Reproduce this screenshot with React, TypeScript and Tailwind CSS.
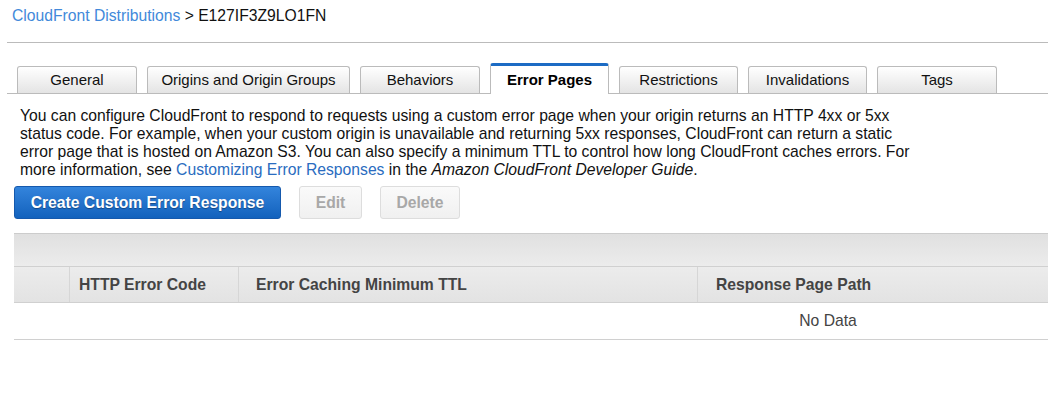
import React from "react";

const tabs = [
  { label: "General", w: "w-[120px]" },
  { label: "Origins and Origin Groups", w: "w-[203px]" },
  { label: "Behaviors", w: "w-[120px]" },
  { label: "Error Pages", w: "w-[119px]", active: true },
  { label: "Restrictions", w: "w-[119px]" },
  { label: "Invalidations", w: "w-[119px]" },
  { label: "Tags", w: "w-[120px]" },
];

function Tabs() {
  return (
    <div className="ml-[7px] mt-[20px] flex items-end gap-[10px] border-b border-[#bbbbbb] pl-[10px]">
      {tabs.map((t) =>
        t.active ? (
          <div
            key={t.label}
            className={`${t.w} -mb-px flex h-[31px] items-center justify-center rounded-t-[3px] border border-b-0 border-[#bbbbbb] border-t-[3px] border-t-[#1c6bc4] bg-white text-[15px] font-bold text-black`}
          >
            {t.label}
          </div>
        ) : (
          <div
            key={t.label}
            className={`${t.w} flex h-[27px] items-center justify-center rounded-t-[3px] border border-b-0 border-[#bbbbbb] bg-gradient-to-b from-white to-[#e4e4e4] pt-px text-[15px] text-[#111]`}
          >
            {t.label}
          </div>
        )
      )}
    </div>
  );
}

function Buttons() {
  return (
    <div className="ml-[14px] mt-[7px] flex gap-[18px]">
      <button className="h-[33px] w-[267px] rounded-[3px] border border-[#1559ad] bg-gradient-to-b from-[#3384dc] to-[#1262bd] text-[15.7px] font-bold text-white [text-shadow:0_1px_1px_rgba(0,0,0,0.35)]">
        Create Custom Error Response
      </button>
      <button className="h-[33px] w-[63px] rounded-[3px] border border-[#dddddd] bg-gradient-to-b from-[#fafafa] to-[#f0f0f0] text-[15.7px] font-bold text-[#a8a8a8]">
        Edit
      </button>
      <button className="h-[33px] w-[80px] rounded-[3px] border border-[#dddddd] bg-gradient-to-b from-[#fafafa] to-[#f0f0f0] text-[15.7px] font-bold text-[#a8a8a8]">
        Delete
      </button>
    </div>
  );
}

function ErrorTable() {
  const cols = [
    { label: "", w: "w-[55px]", pl: "pl-[9px]" },
    { label: "HTTP Error Code", w: "w-[169px]", pl: "pl-[9px]" },
    { label: "Error Caching Minimum TTL", w: "w-[459px]", pl: "pl-[17px]" },
    { label: "Response Page Path", w: "w-[350px]", pl: "pl-[18px]" },
  ];
  return (
    <div className="ml-[14px] mt-[14px] w-[1628px] shrink-0">
      <div className="h-[33px] border-t border-[#cccccc] bg-gradient-to-b from-[#e0e0e0] to-[#ececec]" />
      <div className="flex h-[37px] border-y border-[#d0d0d0] bg-gradient-to-b from-[#ececec] to-[#e3e3e3]">
        {cols.map((c, i) => (
          <div
            key={i}
            className={`${c.w} ${c.pl} flex items-center text-[15.7px] font-bold text-[#444] ${i > 0 ? "border-l border-[#d6d6d6]" : ""}`}
          >
            {c.label}
          </div>
        ))}
        <div className="flex-1" />
      </div>
      <div className="flex h-[37px] items-center justify-center border-b border-[#d0d0d0] text-[15.7px] text-[#444]">
        No Data
      </div>
    </div>
  );
}

export default function App() {
  return (
    <div className="h-[402px] w-[1048px] overflow-hidden bg-white font-['Liberation_Sans',Arial,sans-serif]">
      <div className="px-[12px] pt-[6px] text-[15.7px] leading-[20px] text-[#111]">
        <a className="text-[#4289da]">CloudFront Distributions</a> &gt; E127IF3Z9LO1FN
      </div>
      <div className="ml-[7px] mt-[16px] border-t border-[#bbbbbb]" />
      <Tabs />
      <p className="mt-[13px] max-w-[925px] pl-[20px] text-[15.7px] leading-[18px] text-[#111]">
        You can configure CloudFront to respond to requests using a custom error page when your origin
        returns an HTTP 4xx or 5xx status code. For example, when your custom origin is unavailable and
        returning 5xx responses, CloudFront can return a static error page that is hosted on Amazon S3. You
        can also specify a minimum TTL to control how long CloudFront caches errors. For more information,
        see <a className="text-[#2a6cc0]">Customizing Error Responses</a> in the{" "}
        <i>Amazon CloudFront Developer Guide</i>.
      </p>
      <Buttons />
      <ErrorTable />
    </div>
  );
}
